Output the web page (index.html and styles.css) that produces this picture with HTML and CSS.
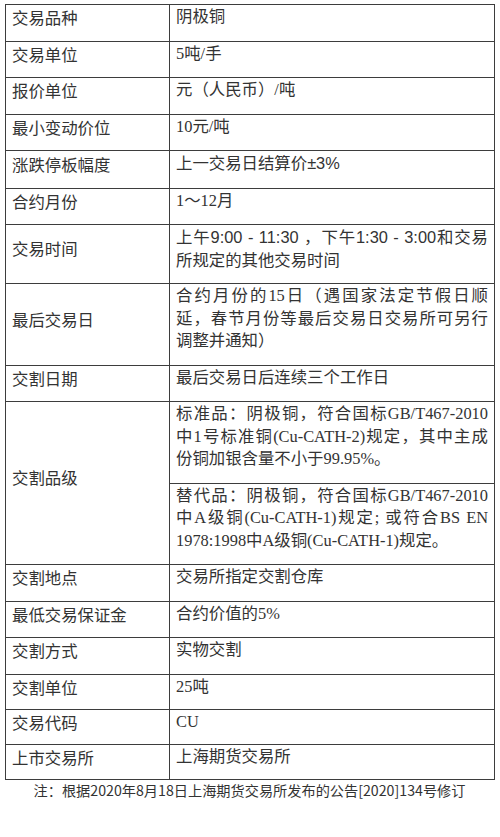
FILE: index.html
```html
<!DOCTYPE html>
<html lang="zh-CN">
<head>
<meta charset="utf-8">
<title>阴极铜期货合约</title>
<link rel="stylesheet" href="styles.css">
</head>
<body>
<div class="page">
  <table class="spec">
    <colgroup><col class="c-label"><col class="c-value"></colgroup>
    <tbody>
      <tr><td class="label">交易品种</td><td class="val">阴极铜</td></tr>
      <tr><td class="label">交易单位</td><td class="val">5吨/手</td></tr>
      <tr><td class="label">报价单位</td><td class="val">元（人民币）/吨</td></tr>
      <tr><td class="label">最小变动价位</td><td class="val">10元/吨</td></tr>
      <tr><td class="label">涨跌停板幅度</td><td class="val">上一交易日结算价<span class="sans">±3%</span></td></tr>
      <tr><td class="label">合约月份</td><td class="val">1～12月</td></tr>
      <tr><td class="label">交易时间</td><td class="val sans">
        <span class="line">上午9:00 - 11:30 ，下午1:30 - 3:00和交易</span>
        <span class="line last">所规定的其他交易时间</span>
      </td></tr>
      <tr><td class="label">最后交易日</td><td class="val">
        <span class="line">合约月份的15日（遇国家法定节假日顺</span>
        <span class="line">延，春节月份等最后交易日交易所可另行</span>
        <span class="line last">调整并通知）</span>
      </td></tr>
      <tr><td class="label">交割日期</td><td class="val">最后交易日后连续三个工作日</td></tr>
      <tr><td class="label" rowspan="2">交割品级</td><td class="val">
        <span class="line">标准品：阴极铜，符合国标GB/T467-2010</span>
        <span class="line">中1号标准铜(Cu-CATH-2)规定，其中主成</span>
        <span class="line last">份铜加银含量不小于99.95%。</span>
      </td></tr>
      <tr><td class="val">
        <span class="line">替代品：阴极铜，符合国标GB/T467-2010</span>
        <span class="line">中A级铜(Cu-CATH-1)规定; 或符合BS EN</span>
        <span class="line last">1978:1998中A级铜(Cu-CATH-1)规定。</span>
      </td></tr>
      <tr><td class="label">交割地点</td><td class="val">交易所指定交割仓库</td></tr>
      <tr><td class="label">最低交易保证金</td><td class="val">合约价值的5%</td></tr>
      <tr><td class="label">交割方式</td><td class="val">实物交割</td></tr>
      <tr class="tight"><td class="label">交割单位</td><td class="val">25吨</td></tr>
      <tr class="tight"><td class="label">交易代码</td><td class="val">CU</td></tr>
      <tr class="tight"><td class="label">上市交易所</td><td class="val">上海期货交易所</td></tr>
    </tbody>
  </table>
  <p class="note">注：根据2020年8月18日上海期货交易所发布的公告[2020]134号修订</p>
</div>
</body>
</html>
```
FILE: styles.css
```css
html, body {
  margin: 0;
  padding: 0;
  background: #ffffff;
}

.page {
  width: 489px;
  margin: 4px 0 0 5px;
}

.spec {
  width: 489px;
  border-collapse: collapse;
  table-layout: fixed;
  font-family: "Noto Sans CJK SC", sans-serif;
  font-size: 16.4px;
  line-height: 22.5px;
  color: #333333;
}

.c-label {
  width: 164px;
}

.c-value {
  width: 325px;
}

.spec td {
  border: 1px solid #3d3d3d;
  padding: 1px 6px 12px 6px;
  vertical-align: middle;
}

.spec .tight td {
  padding-bottom: 10.5px;
}

.spec .val {
  font-family: "Liberation Serif", "Noto Sans CJK SC", serif;
}

.spec .sans {
  font-family: "Liberation Sans", "Noto Sans CJK SC", sans-serif;
}

.line {
  display: block;
  text-align: justify;
  text-align-last: justify;
}

.line.last {
  text-align-last: left;
}

.note {
  margin: 0;
  text-align: center;
  font-family: "Noto Sans CJK SC", sans-serif;
  font-size: 14.2px;
  line-height: 20px;
  color: #333333;
}
```
